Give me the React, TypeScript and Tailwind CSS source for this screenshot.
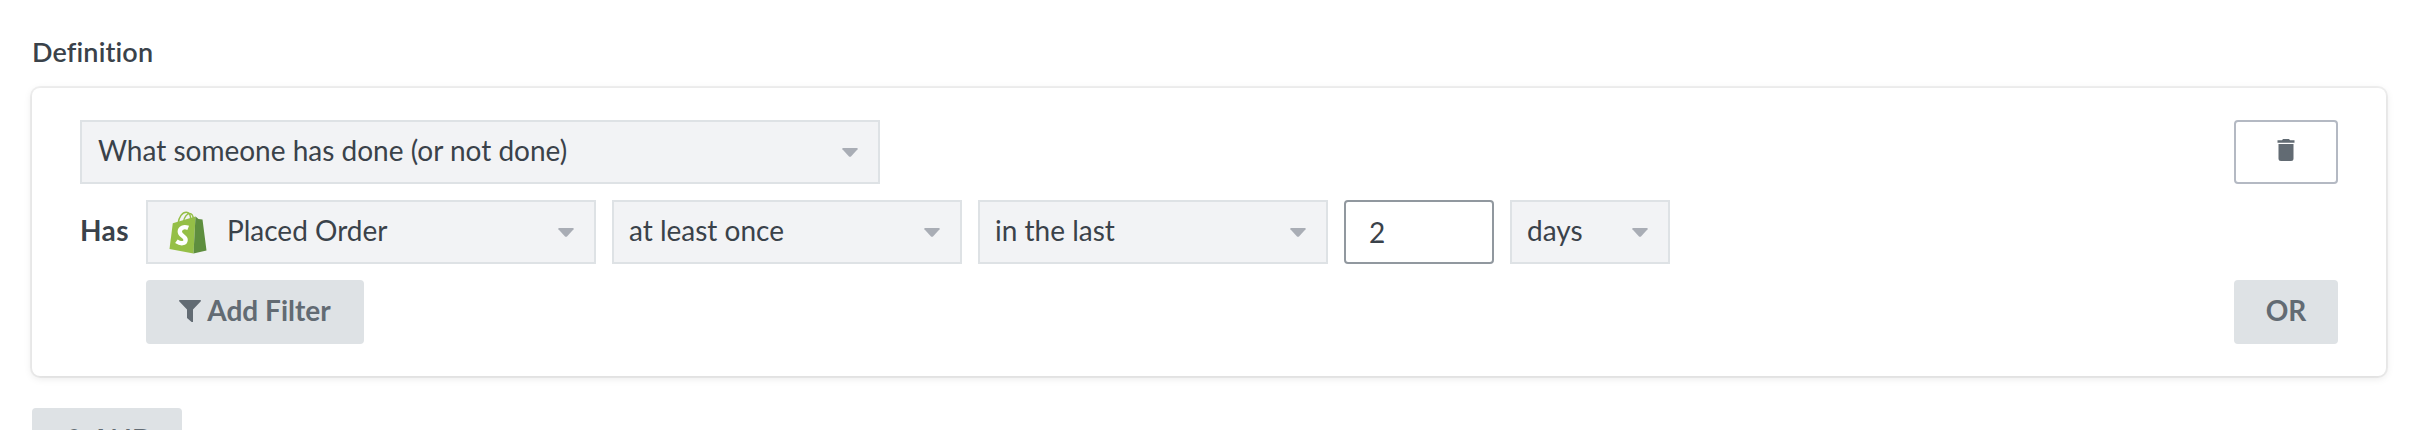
import React from 'react';
import { clsx } from 'clsx';

// --- Icons ---
const CaretIcon = () => (
  <svg viewBox="0 0 16 9" className="h-[9px] w-4 shrink-0 fill-[#a9adb5]">
    <path d="M1 0h14q1 .3.6 1.2L9 8.4q-1 .8-2 0L.4 1.2Q0 .3 1 0z" />
  </svg>
);

const FilterIcon = () => (
  <svg viewBox="0 0 22 22" className="mb-0.5 h-[22px] w-[22px] shrink-0 fill-[#626b73]">
    <path d="M.6 0h20.800q.9.600.2 1.600L14 9.600V22h-1.400L8 18V9.600L.4 1.600Q-.3.600.6 0z" />
  </svg>
);

const TrashIcon = () => (
  <svg viewBox="0 0 18 22" className="h-[22px] w-[18px] fill-[#626b73]">
    <path d="M.5 1.200h4.500L6 0h6l1 1.200h4.500v2.600H.5zM1.500 5h15v14.500q0 2.500-2.500 2.500H4q-2.500 0-2.500-2.500z" />
  </svg>
);

const ShopifyIcon = () => (
  <svg viewBox="0 0 38 43" className="h-[43px] w-[38px] shrink-0">
    <path d="M9.200 12C10 6 13.200 1.200 17.200 1.200c3 0 4.600 3 4.600 8M14.600 10.500C15.200 6 18 2.600 20.600 2.600c2.400 0 3.600 2.600 3.800 6" fill="none" stroke="#95bf47" strokeWidth="1.500" />
    <path d="M3.800 12.200L26.500 5.500 24.500 42.500 .5 38z" fill="#95bf47" />
    <path d="M26.500 5.500l3 2.500 4 .4L37.500 39.500 24.500 42.500z" fill="#5e8e3e" />
    <path d="M19.200 16.900c-4.600-1.900-8.200.1-8.400 3.500-.2 4.600 6 4.500 5.800 8.600-.2 3.800-4.800 4.300-9.200 1.200" fill="none" stroke="#fff" strokeWidth="4.400" />
  </svg>
);

// --- Controls ---
interface SelectBoxProps {
  label: string;
  icon?: React.ReactNode;
  className?: string;
}

const SelectBox: React.FC<SelectBoxProps> = ({ label, icon, className }) => (
  <button
    type="button"
    className={clsx(
      'flex h-16 items-center justify-between border-2 border-[#dee2e5] bg-[#f2f3f5] pr-5 text-left',
      className
    )}
  >
    <span className="flex items-center">
      {icon}
      <span className="pb-1 whitespace-nowrap">{label}</span>
    </span>
    <CaretIcon />
  </button>
);

interface ActionButtonProps {
  children: React.ReactNode;
  className?: string;
}

const ActionButton: React.FC<ActionButtonProps> = ({ children, className }) => (
  <button
    type="button"
    className={clsx(
      'flex h-16 items-center justify-center rounded bg-[#dee2e5] font-bold text-[#626b73]',
      className
    )}
  >
    {children}
  </button>
);

export default function App() {
  return (
    <div className="h-[430px] overflow-hidden bg-white pt-8 pr-[34px] pl-8 font-['Lato',sans-serif] text-[28px] leading-10 text-[#3a424a] [font-variant-ligatures:none]">
      <h2 className="mb-4 h-10 text-[27px] font-semibold tracking-[0.15px]">
        Definition
      </h2>

      <section className="flex h-72 justify-between rounded-lg bg-white px-12 py-8 shadow-[0_0_0_2px_rgba(0,0,0,0.05),0_2px_8px_rgba(0,0,0,0.1)]">
        <div className="flex flex-col gap-4">
          <SelectBox label="What someone has done (or not done)" className="w-[800px] pl-4" />

          <div className="flex items-center gap-4">
            <span className="-mr-4 w-[66px] pb-1 font-bold tracking-[0.4px]">Has</span>
            <SelectBox
              label="Placed Order"
              icon={<span className="mr-5 ml-1.5"><ShopifyIcon /></span>}
              className="w-[450px] pl-[15px]"
            />
            <SelectBox label="at least once" className="w-[350px] pl-[15px]" />
            <SelectBox label="in the last" className="w-[350px] pl-[15px]" />
            <input
              type="text"
              defaultValue="2"
              className="h-16 w-[150px] rounded border-2 border-[#91989f] bg-white px-[23px] outline-none"
            />
            <SelectBox label="days" className="w-40 pl-[15px]" />
          </div>

          <ActionButton className="ml-[66px] w-[218px] gap-1.5">
            <FilterIcon />
            <span className="pb-1">Add Filter</span>
          </ActionButton>
        </div>

        <div className="flex flex-col justify-between">
          <button
            type="button"
            aria-label="Delete"
            className="flex h-16 w-[104px] items-center justify-center rounded border-2 border-[#b4b9c3] bg-white pb-1"
          >
            <TrashIcon />
          </button>
          <ActionButton className="w-[104px]">
            <span className="pb-1">OR</span>
          </ActionButton>
        </div>
      </section>

      <ActionButton className="mt-8 w-[150px] pl-1">
        <span className="pb-0.5">&amp; AND</span>
      </ActionButton>
    </div>
  );
}
